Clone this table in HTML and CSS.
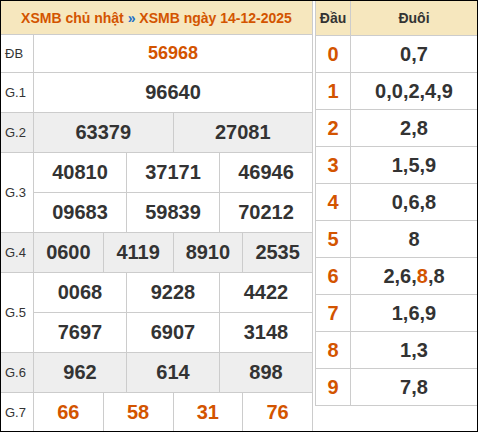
FILE: index.html
```html
<!DOCTYPE html>
<html lang="vi">
<head>
<meta charset="utf-8">
<title>XSMB ngày 14-12-2025</title>
<link rel="stylesheet" href="styles.css">
</head>
<body>
<div class="wrap">
  <div class="kq">
    <div class="kq-head"><span class="title">XSMB chủ nhật <span class="sep">»</span> XSMB ngày 14-12-2025</span></div>
    <div class="row h38">
      <div class="lbl">ĐB</div>
      <div class="cells n1"><div class="c red db">56968</div></div>
    </div>
    <div class="row">
      <div class="lbl">G.1</div>
      <div class="cells n1"><div class="c">96640</div></div>
    </div>
    <div class="row alt">
      <div class="lbl">G.2</div>
      <div class="cells n2"><div class="c">63379</div><div class="c">27081</div></div>
    </div>
    <div class="row h80">
      <div class="lbl">G.3</div>
      <div class="cells n3 two">
        <div class="c">40810</div><div class="c">37171</div><div class="c">46946</div>
        <div class="c">09683</div><div class="c">59839</div><div class="c">70212</div>
      </div>
    </div>
    <div class="row alt">
      <div class="lbl">G.4</div>
      <div class="cells n4"><div class="c">0600</div><div class="c">4119</div><div class="c">8910</div><div class="c">2535</div></div>
    </div>
    <div class="row h80">
      <div class="lbl">G.5</div>
      <div class="cells n3 two">
        <div class="c">0068</div><div class="c">9228</div><div class="c">4422</div>
        <div class="c">7697</div><div class="c">6907</div><div class="c">3148</div>
      </div>
    </div>
    <div class="row alt">
      <div class="lbl">G.6</div>
      <div class="cells n3"><div class="c">962</div><div class="c">614</div><div class="c">898</div></div>
    </div>
    <div class="row last">
      <div class="lbl">G.7</div>
      <div class="cells n4"><div class="c red">66</div><div class="c red">58</div><div class="c red">31</div><div class="c red">76</div></div>
    </div>
  </div>
  <div class="loto">
    <div class="lh"><div class="d dh">Đầu</div><div class="t th">Đuôi</div></div>
    <div class="lr"><div class="d">0</div><div class="t">0,7</div></div>
    <div class="lr"><div class="d">1</div><div class="t">0,0,2,4,9</div></div>
    <div class="lr"><div class="d">2</div><div class="t">2,8</div></div>
    <div class="lr"><div class="d">3</div><div class="t">1,5,9</div></div>
    <div class="lr"><div class="d">4</div><div class="t">0,6,8</div></div>
    <div class="lr"><div class="d">5</div><div class="t">8</div></div>
    <div class="lr"><div class="d">6</div><div class="t"><span>2,6,<span class="hl">8</span>,8</span></div></div>
    <div class="lr"><div class="d">7</div><div class="t">1,6,9</div></div>
    <div class="lr"><div class="d">8</div><div class="t">1,3</div></div>
    <div class="lr"><div class="d">9</div><div class="t">7,8</div></div>
  </div>
</div>
</body>
</html>
```
FILE: styles.css
```css
* { box-sizing: border-box; }
html, body { margin: 0; padding: 0; }
body {
  font-family: "Liberation Sans", Arial, sans-serif;
  color: #333;
  background: #fff;
}
.wrap {
  width: 478px;
  height: 432px;
  border: 1px solid #000;
  display: flex;
  align-items: flex-start;
  gap: 2px;
  overflow: hidden;
}
.kq { width: 312px; }
.kq-head {
  height: 34px;
  background: #f6e7be;
  border-right: 1px solid #ccc;
  border-bottom: 1px solid #ccc;
  display: flex;
  align-items: center;
  justify-content: center;
  font-weight: bold;
  font-size: 14px;
  color: #d35400;
}
.title { white-space: nowrap; }
.sep { color: #1e6fc8; }
.row {
  display: flex;
  height: 40px;
  border-bottom: 1px solid #ccc;
}
.row.h38 { height: 38px; }
.row.h80 { height: 80px; }
.row.last { height: 38px; border-bottom: 0; }
.row.alt { background: #eee; }
.lbl {
  width: 33px;
  flex: none;
  border-right: 1px solid #ccc;
  display: flex;
  align-items: center;
  padding-left: 4px;
  font-size: 13px;
  color: #333;
}
.cells {
  flex: 1;
  display: grid;
  grid-auto-rows: 1fr;
}
.cells.n1 { grid-template-columns: 1fr; }
.cells.n2 { grid-template-columns: repeat(2, 1fr); }
.cells.n3 { grid-template-columns: repeat(3, 1fr); }
.cells.n4 { grid-template-columns: repeat(4, 1fr); }
.c {
  border-right: 1px solid #ccc;
  display: flex;
  align-items: center;
  justify-content: center;
  font-weight: bold;
  font-size: 20px;
  color: #333;
}
.cells.two .c:nth-child(-n+3) { border-bottom: 1px solid #ccc; }
.c.red { color: #d35400; }
.c.db { font-size: 18px; }

.loto {
  flex: 1;
  border-left: 1px solid #ccc;
}
.lh, .lr {
  display: flex;
  border-bottom: 1px solid #ccc;
}
.lh { height: 35px; background: #f6e7be; }
.lr { height: 37px; }
.d {
  width: 35px;
  flex: none;
  border-right: 1px solid #ccc;
  display: flex;
  align-items: center;
  justify-content: center;
  font-weight: bold;
  font-size: 20px;
  color: #d35400;
}
.t {
  flex: 1;
  display: flex;
  align-items: center;
  justify-content: center;
  font-weight: bold;
  font-size: 20px;
  color: #333;
}
.d.dh, .t.th { font-size: 14px; color: #333; }
.hl { color: #d35400; }
```
